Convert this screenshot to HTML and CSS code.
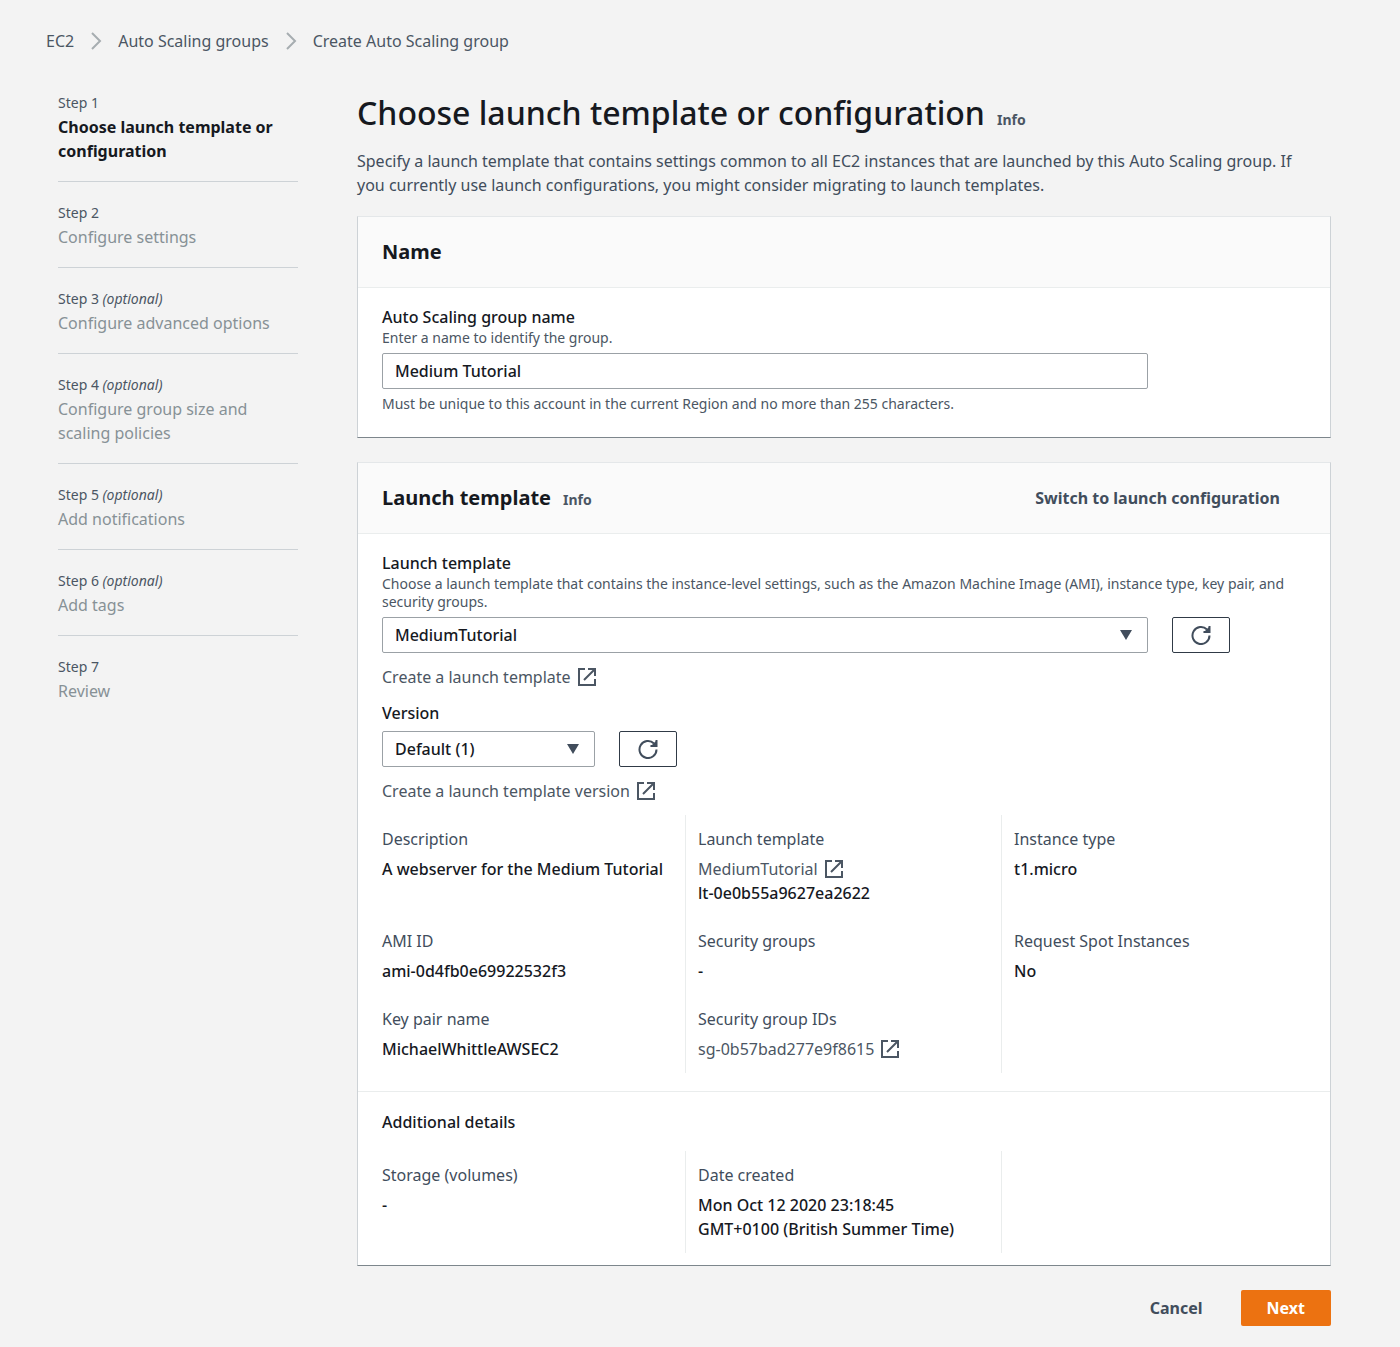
FILE: index.html
```html
<!DOCTYPE html>
<html lang="en">
<head>
<meta charset="utf-8">
<meta name="viewport" content="width=device-width, initial-scale=1">
<title>Create Auto Scaling group | EC2</title>
<link rel="stylesheet" href="styles.css">
</head>
<body>
<svg class="sprite" aria-hidden="true">
  <symbol id="external" viewBox="0 0 18 18"><path d="M7 1H1v16h16v-6M10 1h7v7M17 1 6 12" fill="none" stroke="currentColor" stroke-width="2"/></symbol>
  <symbol id="refresh" viewBox="0 0 20 20"><path d="M18.500 10.500A8.500 8.500 0 1 1 16 4.500M18.500 1v6h-6" fill="none" stroke="currentColor" stroke-width="2"/><path d="M19 1v6.500h-6.500z" fill="currentColor"/></symbol>
  <symbol id="chevron" viewBox="0 0 12 18"><path d="m2 1 8 8-8 8" fill="none" stroke="currentColor" stroke-width="2"/></symbol>
  <symbol id="caret" viewBox="0 0 12 10"><path d="M0 0h12L6 10z" fill="currentColor"/></symbol>
</svg>

<nav class="breadcrumbs" aria-label="Breadcrumbs">
  <a href="#">EC2</a>
  <svg class="chevron"><use href="#chevron"/></svg>
  <a href="#">Auto Scaling groups</a>
  <svg class="chevron"><use href="#chevron"/></svg>
  <span>Create Auto Scaling group</span>
</nav>

<div class="layout">
  <nav aria-label="Steps">
    <ol class="steps">
      <li class="step current" aria-current="step"><span class="step-no">Step 1</span><span class="step-title">Choose launch template or configuration</span></li>
      <li class="step"><span class="step-no">Step 2</span><span class="step-title">Configure settings</span></li>
      <li class="step"><span class="step-no">Step 3 <i>(optional)</i></span><span class="step-title">Configure advanced options</span></li>
      <li class="step"><span class="step-no">Step 4 <i>(optional)</i></span><span class="step-title">Configure group size and scaling policies</span></li>
      <li class="step"><span class="step-no">Step 5 <i>(optional)</i></span><span class="step-title">Add notifications</span></li>
      <li class="step"><span class="step-no">Step 6 <i>(optional)</i></span><span class="step-title">Add tags</span></li>
      <li class="step"><span class="step-no">Step 7</span><span class="step-title">Review</span></li>
    </ol>
  </nav>

  <main>
    <form>
      <header class="page-head">
        <div class="title-row"><h1>Choose launch template or configuration</h1><a class="info" href="#">Info</a></div>
        <p>Specify a launch template that contains settings common to all EC2 instances that are launched by this Auto Scaling group. If you currently use launch configurations, you might consider migrating to launch templates.</p>
      </header>

      <section class="card">
        <div class="card-head"><h2>Name</h2></div>
        <div class="card-body">
          <label class="label" for="name">Auto Scaling group name</label>
          <p class="hint">Enter a name to identify the group.</p>
          <div class="controls"><input class="wide field" id="name" type="text" value="Medium Tutorial"></div>
          <p class="hint">Must be unique to this account in the current Region and no more than 255 characters.</p>
        </div>
      </section>

      <section class="card">
        <div class="card-head">
          <div class="title-row"><h2>Launch template</h2><a class="info" href="#">Info</a></div>
          <button class="btn plain" type="button">Switch to launch configuration</button>
        </div>
        <div class="card-body">
          <label class="label" for="template">Launch template</label>
          <p class="hint">Choose a launch template that contains the instance-level settings, such as the Amazon Machine Image (AMI), instance type, key pair, and security groups.</p>
          <div class="controls">
            <div class="wide select"><select class="field" id="template"><option>MediumTutorial</option></select><svg class="caret"><use href="#caret"/></svg></div>
            <button class="refresh" type="button" aria-label="Refresh launch templates"><svg><use href="#refresh"/></svg></button>
          </div>
          <a class="link" href="#">Create a launch template<svg><use href="#external"/></svg></a>
          <label class="label next" for="version">Version</label>
          <div class="controls">
            <div class="narrow select"><select class="field" id="version"><option>Default (1)</option></select><svg class="caret"><use href="#caret"/></svg></div>
            <button class="refresh" type="button" aria-label="Refresh versions"><svg><use href="#refresh"/></svg></button>
          </div>
          <a class="link" href="#">Create a launch template version<svg><use href="#external"/></svg></a>
        </div>

        <dl class="details">
          <div><dt>Description</dt><dd>A webserver for the Medium Tutorial</dd></div>
          <div><dt>Launch template</dt><dd><a class="inline-link" href="#">MediumTutorial<svg><use href="#external"/></svg></a></dd><dd>lt-0e0b55a9627ea2622</dd></div>
          <div><dt>Instance type</dt><dd>t1.micro</dd></div>
          <div><dt>AMI ID</dt><dd>ami-0d4fb0e69922532f3</dd></div>
          <div><dt>Security groups</dt><dd>-</dd></div>
          <div><dt>Request Spot Instances</dt><dd>No</dd></div>
          <div><dt>Key pair name</dt><dd>MichaelWhittleAWSEC2</dd></div>
          <div><dt>Security group IDs</dt><dd><a class="inline-link" href="#">sg-0b57bad277e9f8615<svg><use href="#external"/></svg></a></dd></div>
          <div></div>
        </dl>

        <div class="extra">
          <h3>Additional details</h3>
          <dl class="details">
            <div><dt>Storage (volumes)</dt><dd>-</dd></div>
            <div><dt>Date created</dt><dd>Mon Oct 12 2020 23:18:45<br>GMT+0100 (British Summer Time)</dd></div>
            <div></div>
          </dl>
        </div>
      </section>

      <div class="actions">
        <button class="btn plain" type="button">Cancel</button>
        <button class="btn primary" type="submit">Next</button>
      </div>
    </form>
  </main>
</div>
</body>
</html>
```
FILE: styles.css
```css
* { box-sizing: border-box; }

body {
  margin: 0;
  padding: 29px 69px 21px 46px;
  background: #f3f3f3;
  color: #16191f;
  font: 16px/24px "Noto Sans", "Open Sans", sans-serif;
}

h1, h2, h3, p, dl, dd, ol { margin: 0; padding: 0; }
a { color: #4b5663; text-decoration: none; }
a:hover { text-decoration: underline; }
button, input, select { font: inherit; color: inherit; }
svg { flex: none; display: block; }
.sprite { display: none; }

.breadcrumbs { display: flex; align-items: center; gap: 16px; color: #4b5663; }
.chevron { width: 12px; height: 18px; color: #a6adb0; }

.layout {
  display: grid;
  grid-template-columns: 240px minmax(0, 1fr);
  gap: 59px;
  margin-top: 38px;
  padding-left: 12px;
}

.steps { list-style: none; }
.step { display: flex; flex-direction: column; padding-bottom: 18px; color: #879196; }
.step + .step { border-top: 1px solid #cdd2d6; padding-top: 19px; }
.step-no { font-size: 14px; color: #4b5663; }
.current .step-title { font-weight: 700; color: #16191f; }

.page-head { color: #414d5c; margin-bottom: 19px; }
.page-head p { padding-right: 16px; }
.title-row { display: flex; align-items: baseline; gap: 12px; }
h1 { font-size: 32px; line-height: 44px; font-weight: 500; color: #16191f; }
.page-head .title-row { margin-bottom: 14px; }
.info { font-size: 14px; font-weight: 700; }

.card {
  background: #fff;
  border: 1px solid #cdd2d6;
  border-top-color: #e4e7e9;
  border-bottom-color: #7d868c;
  margin-bottom: 24px;
}
.card-head {
  display: flex;
  align-items: center;
  justify-content: space-between;
  padding: 17px 24px;
  background: #fafafa;
  border-bottom: 1px solid #eaeded;
}
h2 { font-size: 20px; line-height: 36px; font-weight: 700; }
.card-body { padding: 17px 24px 24px; }
.card-body:has(+ .details) { padding-bottom: 12px; }

.label { display: block; font-weight: 500; }
.label.next { margin-top: 12px; }
.hint { font-size: 14px; line-height: 18px; color: #4b5663; }

.controls {
  display: grid;
  grid-template-columns: repeat(12, minmax(0, 1fr));
  column-gap: 24px;
  margin: 6px 0;
}
.wide { grid-column: span 10; }
.narrow { grid-column: span 3; }
.field {
  width: 100%;
  height: 36px;
  padding: 0 12px;
  background: #fff;
  border: 1px solid #9ba1a6;
  border-radius: 2px;
  font-weight: 500;
  appearance: none;
}
.select { display: grid; align-items: center; }
.select > * { grid-area: 1 / 1; }
.caret { width: 12px; height: 10px; margin-right: 16px; justify-self: end; color: #414d5c; pointer-events: none; }
.refresh {
  display: grid;
  place-items: center;
  width: 58px;
  height: 36px;
  padding: 0;
  background: #fff;
  color: #414d5c;
  border: 1px solid #303a46;
  border-radius: 2px;
}
.refresh svg { width: 20px; height: 20px; }

.link { display: flex; align-items: center; gap: 7px; width: fit-content; margin-top: 12px; }
.inline-link { display: inline-flex; align-items: center; gap: 7px; vertical-align: top; font-weight: 400; }
.link svg, .inline-link svg { width: 18px; height: 18px; }

.details {
  display: grid;
  grid-template-columns: repeat(3, minmax(0, 1fr));
  padding: 0 13px 0 11px;
}
.details > div { padding: 12px; border-left: 1px solid #eaeded; }
.details > div:nth-child(3n + 1) { border-color: transparent; }
dt { color: #414d5c; margin-bottom: 6px; }
dd { font-weight: 500; }

.extra { margin-top: 18px; padding: 18px 0 12px; border-top: 1px solid #eaeded; }
h3 { font-size: 16px; font-weight: 500; padding: 0 24px 17px; }

.actions { display: flex; justify-content: flex-end; gap: 12px; }
.btn { height: 36px; padding: 0 26px; border: 0; border-radius: 2px; font-weight: 700; }
.plain { background: none; color: #414d5c; }
.primary { background: #ec7211; color: #fff; }
```
